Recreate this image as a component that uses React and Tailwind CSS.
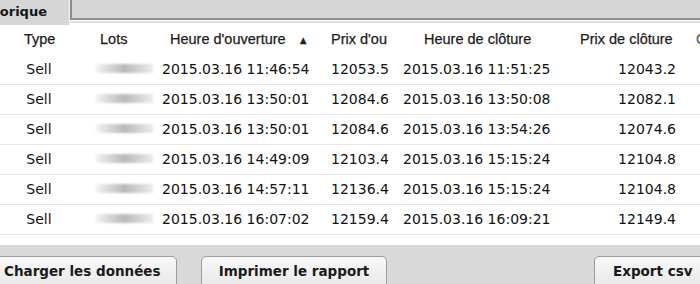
import React from "react";

const rows = [
  { open: "2015.03.16 11:46:54", openPrice: "12053.5", close: "2015.03.16 11:51:25", closePrice: "12043.2" },
  { open: "2015.03.16 13:50:01", openPrice: "12084.6", close: "2015.03.16 13:50:08", closePrice: "12082.1" },
  { open: "2015.03.16 13:50:01", openPrice: "12084.6", close: "2015.03.16 13:54:26", closePrice: "12074.6" },
  { open: "2015.03.16 14:49:09", openPrice: "12103.4", close: "2015.03.16 15:15:24", closePrice: "12104.8" },
  { open: "2015.03.16 14:57:11", openPrice: "12136.4", close: "2015.03.16 15:15:24", closePrice: "12104.8" },
  { open: "2015.03.16 16:07:02", openPrice: "12159.4", close: "2015.03.16 16:09:21", closePrice: "12149.4" },
];

const verdana = "font-['DejaVu_Sans',Verdana,sans-serif]";
const helv = "font-['Liberation_Sans',Arial,sans-serif]";

const Button = ({ children, className }) => (
  <div
    className={`h-[40px] shrink-0 rounded-t-[5px] border border-[#9c9c9c] bg-gradient-to-b from-[#f7f7f7] to-[#e4e4e4] pt-[4px] text-[13.5px] font-bold text-[#1a1a1a] ${verdana} ${className}`}
  >
    {children}
  </div>
);

export default function App() {
  return (
    <div className="w-[700px] h-[284px] overflow-hidden bg-white flex flex-col">
      {/* tab bar */}
      <div className="flex h-[25px] shrink-0">
        <div className="w-[69px] shrink-0 bg-[#d6d6d6] overflow-hidden whitespace-nowrap">
          <span className={`block ml-[-29.5px] pt-[2px] text-[13px] font-bold text-[#151515] ${verdana}`}>
            Historique
          </span>
        </div>
        <div className="flex-1 flex flex-col border-l border-[#f2f2f2]">
          <div className="h-[20px] bg-[#d6d6d6] border-l-2 border-b-2 border-[#8c8c8c]" />
          <div className="h-px bg-white" />
          <div className="h-[2px] bg-[#dedede]" />
        </div>
      </div>

      {/* header */}
      <div className={`flex h-[30px] shrink-0 items-center whitespace-nowrap text-[14.5px] text-[#1c1c1c] [-webkit-text-stroke:0.25px_#1c1c1c] ${helv}`}>
        <div className="w-[80px] shrink-0 pl-[24px]">Type</div>
        <div className="w-[78px] shrink-0 pl-[20px]">Lots</div>
        <div className="w-[160px] shrink-0 pl-[12px] flex items-center">
          Heure d'ouverture
          <span className="ml-[12px] text-[11px] text-[#222]">▲</span>
        </div>
        <div className="w-[82px] shrink-0 pl-[13px]">Prix d'ou</div>
        <div className="w-[165px] shrink-0 pl-[24px]">Heure de clôture</div>
        <div className="w-[120px] shrink-0 pl-[15px]">Prix de clôture</div>
        <div className="shrink-0 pl-[11px] text-[#777]">Commission</div>
      </div>

      {/* rows */}
      {rows.map((r, i) => (
        <div
          key={i}
          className={`flex h-[30px] shrink-0 items-center whitespace-nowrap border-b border-[#e6e6e6] text-[14px] text-[#111] ${verdana}`}
        >
          <div className="w-[78px] shrink-0 text-center">Sell</div>
          <div className="w-[80px] shrink-0 pl-[18px]">
            <div className="h-[9px] w-[57px] mt-[-2px] blur-[1px] bg-gradient-to-r from-[#f3f3f3] via-[#b9b9b9] to-[#ececec]" />
          </div>
          <div className="w-[160px] shrink-0 pl-[4px]">{r.open}</div>
          <div className="w-[82px] shrink-0 pl-[13px]">{r.openPrice}</div>
          <div className="w-[165px] shrink-0 pl-[3px]">{r.close}</div>
          <div className="w-[120px] shrink-0 pr-[9px] text-right">{r.closePrice}</div>
        </div>
      ))}

      {/* footer */}
      <div className="mt-[10px] flex-1 bg-[#d9d9d9] pt-[11px] flex items-start whitespace-nowrap">
        <Button className="ml-[-5px] w-[182px] pl-[8px]">Charger les données</Button>
        <Button className="ml-[24px] w-[186px] text-center">Imprimer le rapport</Button>
        <div className="flex-1" />
        <Button className="w-[112px] mr-[-6px] pl-[18px]">Export csv</Button>
      </div>
    </div>
  );
}
